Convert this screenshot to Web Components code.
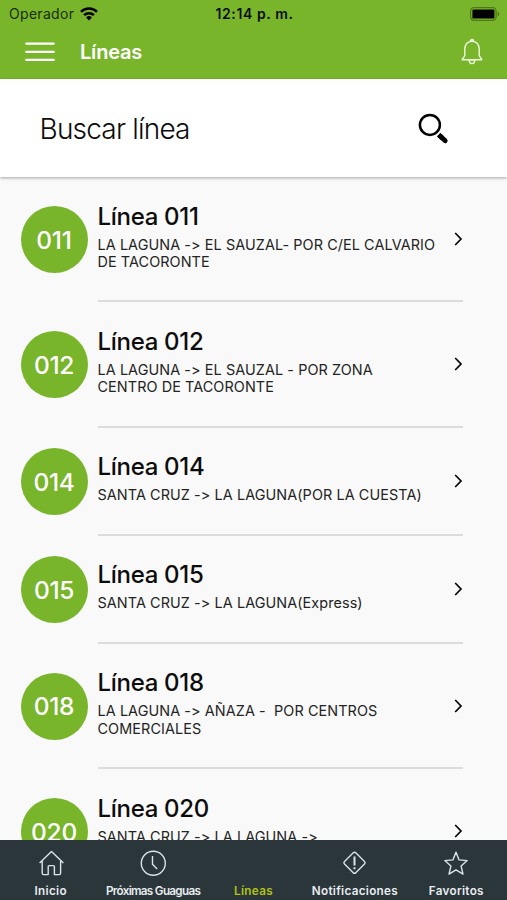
<!DOCTYPE html>
<html lang="es">
<head>
  <meta charset="utf-8">
  <meta name="viewport" content="width=device-width, initial-scale=1">
  <title>Líneas</title>
  <style>
    :root {
      --primary-color: rgb(120, 181, 43);
      --dark: rgb(43, 54, 59);
      --active: rgb(176, 196, 16);
      --background: rgb(249, 249, 249);
      --border: 2px solid rgb(220, 220, 220);
    }
    body {
      margin: 0;
      font-family: Inter, "Liberation Sans", sans-serif;
      font-feature-settings: "calt" 0;
      color: rgb(12, 12, 12);
    }
  </style>
</head>
<body>
  <app-screen>
    <status-bar slot="top" operator="Operador" time="12:14 p. m."></status-bar>
    <app-header slot="top">Líneas</app-header>
    <search-box slot="top">Buscar línea</search-box>
    <line-list></line-list>
    <tab-bar slot="bottom"></tab-bar>
  </app-screen>

  <script>
    class Screen extends HTMLElement {
      constructor () {
        super()
        this.shadow = this.attachShadow({ mode: 'open' })
      }

      connectedCallback () {
        this.shadow.innerHTML =
          /* html */`
          <style>
            :host {
              height: 100vh;
              display: flex;
              flex-direction: column;
              overflow: hidden;
              background-color: var(--background);
            }
            main {
              flex: 1;
              min-height: 0;
              overflow: hidden;
            }
          </style>
          <slot name="top"></slot>
          <main><slot></slot></main>
          <slot name="bottom"></slot>
          `
      }
    }

    class StatusBar extends HTMLElement {
      constructor () {
        super()
        this.shadow = this.attachShadow({ mode: 'open' })
      }

      connectedCallback () {
        this.shadow.innerHTML =
          /* html */`
          <style>
            :host {
              height: 27px;
              box-sizing: border-box;
              display: grid;
              grid-template-columns: 1fr auto 1fr;
              align-items: center;
              padding: 0 7px 0 9px;
              background-color: var(--primary-color);
              font-size: 14px;
            }
            .operator {
              display: flex;
              align-items: center;
              gap: 6px;
              color: rgb(25, 45, 8);
              letter-spacing: 0.3px;
            }
            .time {
              font-weight: 600;
              letter-spacing: 0.6px;
            }
            .battery {
              justify-self: end;
            }
            svg {
              display: block;
            }
          </style>
          <div class="operator">
            <span>${this.getAttribute('operator')}</span>
            <svg width="18" height="14" viewBox="0 0 18 14" fill="none" stroke="black" stroke-width="2.5">
              <path d="M1 4.9a11.4 11.4 0 0 1 16 0M4.1 8.2a7 7 0 0 1 9.8 0"/>
              <path d="M9 13.4 6.1 10.4a4.1 4.1 0 0 1 5.8 0z" fill="black" stroke="none"/>
            </svg>
          </div>
          <span class="time">${this.getAttribute('time')}</span>
          <svg class="battery" width="31" height="14" viewBox="0 0 31 14">
            <rect x="1.6" y="0.7" width="25.5" height="12.6" rx="3.5" fill="none" stroke="rgb(76, 120, 24)" stroke-width="1.3"/>
            <rect x="3.4" y="2.4" width="22" height="9.2" rx="1.2" fill="black"/>
            <path d="M28.6 4.6c2.2.8 2.2 4 0 4.8z" fill="rgb(76, 120, 24)"/>
          </svg>
          `
      }
    }

    class Header extends HTMLElement {
      constructor () {
        super()
        this.shadow = this.attachShadow({ mode: 'open' })
      }

      connectedCallback () {
        this.shadow.innerHTML =
          /* html */`
          <style>
            :host {
              height: 52px;
              box-sizing: border-box;
              display: flex;
              align-items: center;
              padding: 0 24px 2px 25px;
              background-color: var(--primary-color);
              color: white;
            }
            h1 {
              flex: 1;
              margin: 0 0 0 25px;
              font-size: 20px;
              font-weight: 600;
              letter-spacing: -0.2px;
            }
          </style>
          <svg width="30" height="22" viewBox="0 0 30 22" stroke="white" stroke-width="2.2" stroke-linecap="round">
            <path d="M1.2 2.6h27.6M1.2 10.9h27.6M1.2 18.9h27.6"/>
          </svg>
          <h1><slot></slot></h1>
          <svg width="22" height="28" viewBox="0 0 22 28" fill="none" stroke="rgb(238, 248, 222)" stroke-width="1.4" stroke-linejoin="round">
            <path d="M11 3.2c-4.6 0-7.2 3.5-7.2 8v6.3c0 1.5-2.6 2.5-2.6 4.3h19.6c0-1.8-2.6-2.8-2.6-4.3v-6.3c0-4.5-2.6-8-7.2-8zM9.3 3.2a1.7 1.7 0 0 1 3.4 0M8.3 22a2.7 3.6 0 0 0 5.4 0z"/>
          </svg>
          `
      }
    }

    class SearchBox extends HTMLElement {
      constructor () {
        super()
        this.shadow = this.attachShadow({ mode: 'open' })
      }

      connectedCallback () {
        this.shadow.innerHTML =
          /* html */`
          <style>
            :host {
              position: relative;
              height: 98px;
              box-sizing: border-box;
              display: flex;
              justify-content: space-between;
              align-items: center;
              padding: 1px 58px 0 39.5px;
              background-color: white;
              box-shadow: 0 1px 3px rgba(0, 0, 0, 0.35);
              font-size: 28px;
              font-weight: 300;
              letter-spacing: -0.8px;
            }
          </style>
          <slot></slot>
          <svg width="32" height="32" viewBox="0 0 32 32" fill="none" stroke="black">
            <circle cx="12.9" cy="11.9" r="10" stroke-width="2.5"/>
            <path d="M21.6 21.6l3.8 3.6" stroke-width="5"/>
            <path d="M24 23.8l4.2 4" stroke-width="4.8" stroke-linecap="round"/>
          </svg>
          `
      }
    }

    class LineItem extends HTMLElement {
      constructor () {
        super()
        this.shadow = this.attachShadow({ mode: 'open' })
      }

      connectedCallback () {
        this.shadow.innerHTML =
          /* html */`
          <style>
            :host {
              display: grid;
              grid-template-columns: 67px 1fr;
              column-gap: 10px;
              align-items: center;
              padding: 0 44px 0 20.5px;
            }
            .badge {
              width: 67px;
              height: 67px;
              display: flex;
              justify-content: center;
              align-items: center;
              border-radius: 50%;
              background-color: var(--primary-color);
              color: white;
              font-size: 24.5px;
              font-weight: 450;
              letter-spacing: -0.3px;
            }
            .content {
              display: flex;
              justify-content: space-between;
              align-items: center;
              padding: 24.7px 0 29.9px;
              border-bottom: var(--border);
            }
            h2 {
              margin: 0 0 5px;
              font-size: 24px;
              line-height: 29px;
              font-weight: 480;
              letter-spacing: -0.3px;
            }
            p {
              margin: 0;
              font-size: 14.4px;
              line-height: 17.4px;
              letter-spacing: 0.09px;
              white-space: pre-line;
              color: rgb(35, 35, 35);
            }
            svg {
              margin-top: 6px;
            }
            ::slotted(span) {
              white-space: pre;
            }
          </style>
          <div class="badge">${this.getAttribute('number')}</div>
          <div class="content">
            <div>
              <h2>Línea ${this.getAttribute('number')}</h2>
              <p><slot></slot></p>
            </div>
            <svg width="10" height="16" viewBox="0 0 10 16" fill="none" stroke="black" stroke-width="1.7">
              <path d="M2.2 2 8 8 2.2 14"/>
            </svg>
          </div>
          `
      }
    }

    class LineList extends HTMLElement {
      constructor () {
        super()
        this.shadow = this.attachShadow({ mode: 'open' })
      }

      connectedCallback () {
        this.lines = [
          { number: '011', route: 'LA LAGUNA -> EL SAUZAL- POR C/EL CALVARIO\nDE TACORONTE' },
          { number: '012', route: 'LA LAGUNA -> EL SAUZAL - POR ZONA\nCENTRO DE TACORONTE' },
          { number: '014', route: 'SANTA CRUZ -> LA LAGUNA(POR LA CUESTA)' },
          { number: '015', route: 'SANTA CRUZ -> LA LAGUNA(Express)' },
          { number: '018', route: 'LA LAGUNA -> AÑAZA -  POR CENTROS\nCOMERCIALES' },
          { number: '020', route: 'SANTA CRUZ -> LA LAGUNA ->\nTACORONTE' }
        ]
        this.render()
      }

      render () {
        this.shadow.innerHTML =
          /* html */`
          <style>
            :host {
              display: block;
              margin-top: -0.2px;
            }
          </style>
          `
        this.lines.forEach(line => {
          const item = document.createElement('line-item')
          const route = document.createElement('span')
          item.setAttribute('number', line.number)
          route.textContent = line.route
          item.appendChild(route)
          this.shadow.appendChild(item)
        })
      }
    }

    class TabBar extends HTMLElement {
      constructor () {
        super()
        this.shadow = this.attachShadow({ mode: 'open' })
      }

      connectedCallback () {
        this.tabs = [
          { label: 'Inicio', icon: '<path d="M1.6 12.9 13.5 1.6l11.9 11.3M4.2 11v12.2q0 1.4 1.4 1.4h4.6v-8q0-1 1-1h4.2q1 0 1 1v8h4.8q1.400 0 1.400-1.400V11"/>' },
          { label: 'Próximas Guaguas', name: 'tight', icon: '<circle cx="13.3" cy="13.3" r="12"/><path d="M12.5 6v8.2l4.700 4.800"/>' },
          { label: 'Líneas', name: 'active', icon: '' },
          { label: 'Notificaciones', icon: '<path d="M12.5 2.3q.8 0 1.5.7l8.5 8.500q1.300 1.300 0 2.600L14 22.600q-1.500 1.300-3 0L2.500 14.100q-1.300-1.300 0-2.600L11 3q.7-.7 1.500-.7z"/><path d="M12.500 6.500v9M12.500 17.300v2" stroke-width="2"/>' },
          { label: 'Favoritos', icon: '<path d="M13 2.200l3.100 7.700 8.100.7-6.100 5.400 1.900 8.100-7-4.300-7 4.300 1.900-8.100-6.100-5.400 8.100-.7z"/>' }
        ]
        this.render()
      }

      render () {
        this.shadow.innerHTML =
          /* html */`
          <style>
            :host {
              height: 60px;
              display: grid;
              grid-template-columns: repeat(5, 1fr);
              background-color: var(--dark);
              color: rgb(232, 236, 238);
            }
            .tab {
              display: flex;
              flex-direction: column;
              align-items: center;
              gap: 7px;
              padding-top: 10px;
              font-size: 11.7px;
              font-weight: 600;
              line-height: 16px;
              letter-spacing: 0.3px;
              white-space: nowrap;
            }
            .tight {
              padding-left: 2px;
              letter-spacing: -0.7px;
            }
            .active {
              color: var(--active);
            }
            svg {
              stroke: rgb(218, 228, 231);
            }
          </style>
          `
        this.tabs.forEach(tab => {
          const tabContainer = document.createElement('div')
          tabContainer.classList.add('tab')
          if (tab.name) tabContainer.classList.add(tab.name)
          tabContainer.innerHTML = `
            <svg width="26" height="26" viewBox="0 0 26 26" fill="none" stroke-width="1.4" stroke-linejoin="round">${tab.icon}</svg>
            <span>${tab.label}</span>`
          this.shadow.appendChild(tabContainer)
        })
      }
    }

    customElements.define('app-screen', Screen)
    customElements.define('status-bar', StatusBar)
    customElements.define('app-header', Header)
    customElements.define('search-box', SearchBox)
    customElements.define('line-item', LineItem)
    customElements.define('line-list', LineList)
    customElements.define('tab-bar', TabBar)
  </script>
</body>
</html>
